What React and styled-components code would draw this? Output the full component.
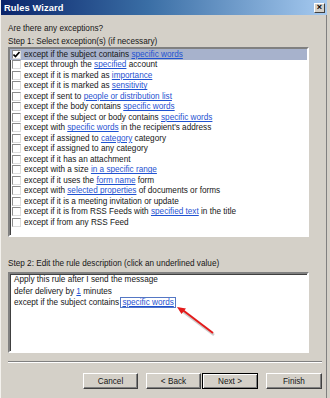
import React from "react";
import styled, { createGlobalStyle } from "styled-components";

const GlobalStyle = createGlobalStyle`
  html, body {
    margin: 0;
    padding: 0;
    background: #d4d0c8;
  }
  * {
    box-sizing: border-box;
  }
`;

const Window = styled.div`
  position: relative;
  width: 330px;
  height: 398px;
  background: #d4d0c8;
  font-family: "Liberation Sans", Arial, sans-serif;
  font-size: 8.2px;
  color: #161616;
  border-left: 1px solid #f4f2ee;
  border-right: 3px solid #d4d0c8;
  box-shadow: inset -1px 0 0 #808080;
  display: flex;
  flex-direction: column;
  overflow: hidden;
`;

const TitleBar = styled.div`
  height: 15px;
  display: flex;
  align-items: center;
  justify-content: space-between;
  padding: 0 2px 0 3px;
  background: linear-gradient(to right, #0a246a 0%, #3a6ea5 45%, #a6caf0 100%);
`;

const Title = styled.span`
  color: #fff;
  font-weight: bold;
  font-size: 9.3px;
  letter-spacing: 0.1px;
`;

const CloseButton = styled.div`
  width: 11px;
  height: 10px;
  background: #d4d0c8;
  border: 1px solid;
  border-color: #fff #404040 #404040 #fff;
  display: flex;
  align-items: center;
  justify-content: center;
  font-size: 9px;
  font-weight: bold;
  line-height: 1;
  color: #000;
`;

const Body = styled.div`
  display: flex;
  flex-direction: column;
  padding: 8px 0 0 7px;
`;

const Label = styled.div`
  line-height: 11px;
  margin-top: ${(p) => p.$gap || 0}px;
`;

const Sunken = styled.div`
  width: 301px;
  height: ${(p) => p.$h}px;
  margin-top: ${(p) => p.$gap || 0}px;
  background: #fff;
  border: 2px solid;
  border-color: #808080 #fff #fff #808080;
  box-shadow: inset 1px 1px 0 #404040;
`;

const List = styled(Sunken)`
  padding-top: 0;
`;

const Row = styled.div`
  height: 10.5px;
  display: flex;
  align-items: center;
  padding-left: 2px;
  gap: 3px;
  white-space: nowrap;
  background: ${(p) => (p.$selected ? "#a7b2cc" : "transparent")};
`;

const Check = styled.span`
  width: 9px;
  height: 9px;
  flex: none;
  background: #fff;
  border: 1px solid;
  border-color: #8c8c8c #dcdcdc #dcdcdc #8c8c8c;
  display: flex;
  align-items: center;
  justify-content: center;
`;

const Link = styled.span`
  color: #1f52d1;
  text-decoration: underline;
  padding: ${(p) => (p.$focus ? "0 1px" : "0")};
  outline: ${(p) => (p.$focus ? "1px solid #5577c4" : "none")};
`;

const Desc = styled(Sunken)`
  padding: 0 0 0 4px;
  line-height: 11.5px;
`;

const Separator = styled.div`
  width: 314px;
  margin-top: 8px;
  height: 2px;
  border-top: 1px solid #808080;
  border-bottom: 1px solid #fff;
`;

const ButtonRow = styled.div`
  display: flex;
  width: 314px;
  justify-content: flex-end;
  margin-top: 10px;
`;

const Button = styled.div`
  width: ${(p) => p.$w || 55}px;
  height: 16px;
  margin-left: ${(p) => p.$gap}px;
  display: flex;
  align-items: center;
  justify-content: center;
  background: #d4d0c8;
  border: 1px solid;
  border-color: ${(p) => (p.$default ? "#000" : "#fff #404040 #404040 #fff")};
  box-shadow: ${(p) =>
    p.$default
      ? "inset 1px 1px 0 #fff, inset -1px -1px 0 #808080"
      : "inset -1px -1px 0 #808080"};
  font-size: 8.2px;
`;

const Arrow = styled.svg`
  position: absolute;
  left: 170px;
  top: 302px;
  pointer-events: none;
`;

const rows = [
  ["except if the subject contains ", "specific words", ""],
  ["except through the ", "specified", " account"],
  ["except if it is marked as ", "importance", ""],
  ["except if it is marked as ", "sensitivity", ""],
  ["except if sent to ", "people or distribution list", ""],
  ["except if the body contains ", "specific words", ""],
  ["except if the subject or body contains ", "specific words", ""],
  ["except with ", "specific words", " in the recipient's address"],
  ["except if assigned to ", "category", " category"],
  ["except if assigned to any category", "", ""],
  ["except if it has an attachment", "", ""],
  ["except with a size ", "in a specific range", ""],
  ["except if it uses the ", "form name", " form"],
  ["except with ", "selected properties", " of documents or forms"],
  ["except if it is a meeting invitation or update", "", ""],
  ["except if it is from RSS Feeds with ", "specified text", " in the title"],
  ["except if from any RSS Feed", "", ""],
];

function CheckMark() {
  return (
    <svg width="7" height="7" viewBox="0 0 7 7">
      <path d="M0.5 3.5 L2.5 5.5 L6.5 1" stroke="#000" strokeWidth="1.6" fill="none" />
    </svg>
  );
}

export default function App() {
  return (
    <>
      <GlobalStyle />
      <Window>
        <TitleBar>
          <Title>Rules Wizard</Title>
          <CloseButton>×</CloseButton>
        </TitleBar>
        <Body>
          <Label>Are there any exceptions?</Label>
          <Label $gap={2}>Step 1: Select exception(s) (if necessary)</Label>
          <List $h={190}>
            {rows.map(([a, link, b], i) => (
              <Row key={i} $selected={i === 0}>
                <Check>{i === 0 && <CheckMark />}</Check>
                <span>
                  {a}
                  {link && <Link>{link}</Link>}
                  {b}
                </span>
              </Row>
            ))}
          </List>
          <Label $gap={21}>Step 2: Edit the rule description (click an underlined value)</Label>
          <Desc $h={81} $gap={3}>
            <div>Apply this rule after I send the message</div>
            <div>
              defer delivery by <Link>1</Link> minutes
            </div>
            <div>
              except if the subject contains <Link $focus>specific words</Link>
            </div>
          </Desc>
          <Separator />
          <ButtonRow>
            <Button $gap={0}>Cancel</Button>
            <Button $gap={8}>&lt; Back</Button>
            <Button $gap={1} $w={56} $default>
              Next &gt;
            </Button>
            <Button $gap={8} $w={56}>
              Finish
            </Button>
          </ButtonRow>
        </Body>
        <Arrow width="50" height="40" viewBox="0 0 50 40">
          <line x1="42" y1="31" x2="10" y2="7" stroke="#00000033" strokeWidth="2.5" transform="translate(1 2)" />
          <line x1="42" y1="31" x2="11" y2="7.5" stroke="#e41b1b" strokeWidth="2" />
          <path d="M6 5 L15 6.5 L10.5 12 Z" fill="#e41b1b" />
        </Arrow>
      </Window>
    </>
  );
}
